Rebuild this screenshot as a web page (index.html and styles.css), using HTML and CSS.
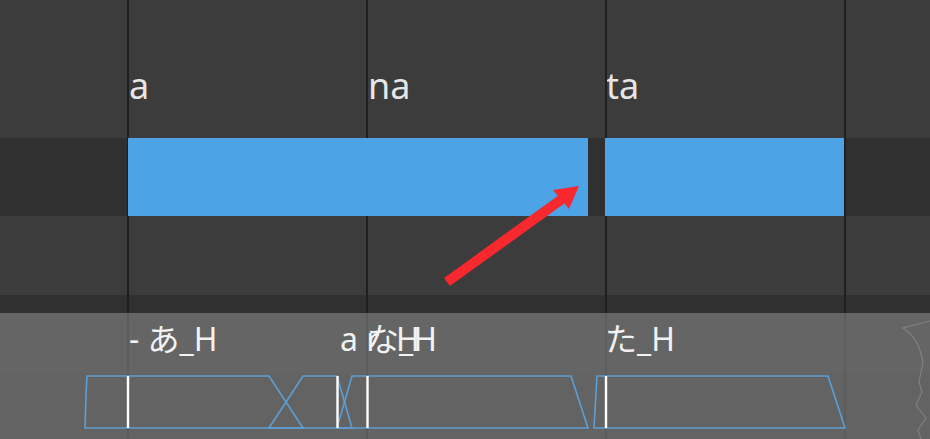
FILE: index.html
```html
<!DOCTYPE html>
<html lang="ja">
<head>
<meta charset="utf-8">
<title>Piano roll</title>
<link rel="stylesheet" href="styles.css">
</head>
<body>
<div class="app">
  <div class="track">
    <div class="band band-lyric">
      <span class="lyric" style="left:128px">a</span>
      <span class="lyric" style="left:367px">na</span>
      <span class="lyric" style="left:605px">ta</span>
    </div>
    <div class="band band-notes">
      <div class="note" style="left:128px;width:460px"></div>
      <div class="note" style="left:605px;width:239px"></div>
    </div>
    <div class="band band-mid"></div>
    <div class="band band-thin"></div>
  </div>

  <div class="gridlines">
    <span class="gl" style="left:127px"></span>
    <span class="gl" style="left:366px"></span>
    <span class="gl" style="left:605px"></span>
    <span class="gl" style="left:844px"></span>
  </div>

  <div class="panel">
    <div class="phonemes">
      <span class="ph" style="left:129px">- あ_H</span>
      <span class="ph" style="left:340px">a r</span>
      <span class="ph" style="left:367px">な_H</span>
      <span class="ph" style="left:396px">H</span>
      <span class="ph" style="left:605px">た_H</span>
    </div>
    <div class="envelopes">
      <svg class="env-svg" width="930" height="66" viewBox="0 0 930 66">
        <g fill="none" stroke="#5c9fd6" stroke-width="1.6" stroke-linejoin="miter">
          <polygon points="87,3 269,3 303,55 85,55 86,22"/>
          <polygon points="269,55 303,3 337,3 352,55"/>
          <polygon points="337,55 352,3 571,3 588,55"/>
          <polygon points="597,3 828,3 845,55 594,55 596,20"/>
        </g>
        <g stroke="#ffffff" stroke-width="2.4">
          <line x1="128" y1="3" x2="128" y2="55"/>
          <line x1="337.5" y1="3" x2="337.5" y2="55"/>
          <line x1="367.5" y1="3" x2="367.5" y2="55"/>
          <line x1="606" y1="3" x2="606" y2="55"/>
        </g>
      </svg>
    </div>
  </div>

  <svg class="overlay" width="930" height="439" viewBox="0 0 930 439">
    <path d="M930 321 L903 328 Q916 336 921 353 L923 362 L919 382 L922 392 L916 405 L926 418 L918 430 L921 439" fill="none" stroke="#a9adb0" stroke-opacity="0.4" stroke-width="1.2"/>
    <line x1="447" y1="282" x2="562" y2="199" stroke="#f7282e" stroke-width="10"/>
    <polygon points="579,186 553,190 569,209" fill="#f7282e"/>
  </svg>
</div>
</body>
</html>
```

FILE: styles.css
```css
* { box-sizing: border-box; }
html, body { margin: 0; padding: 0; }
body {
  background: #3c3c3c;
  font-family: "Noto Sans", "Open Sans", "Noto Sans CJK JP", sans-serif;
  overflow: hidden;
}
.app {
  position: relative;
  width: 930px;
  height: 439px;
  overflow: hidden;
  background: #3c3c3c;
  display: flex;
  flex-direction: column;
}
.track {
  display: flex;
  flex-direction: column;
  flex: 0 0 313px;
}
.band { position: relative; width: 100%; }
.band-lyric { height: 138px; background: #3c3c3c; }
.band-notes { height: 78px; background: #303030; }
.band-mid { height: 79px; background: #3c3c3c; }
.band-thin { height: 18px; background: #303030; }

.lyric {
  position: absolute;
  top: 68px;
  font-size: 36px;
  line-height: 36px;
  color: #e6e6e6;
  padding-left: 1px;
}
.note {
  position: absolute;
  z-index: 2;
  top: 0;
  bottom: 0;
  background: #4ca3e6;
}

.gridlines {
  position: absolute;
  inset: 0;
  z-index: 1;
  pointer-events: none;
}
.gl {
  position: absolute;
  top: 0;
  bottom: 0;
  width: 2px;
  background: #1f1f1f;
}

.panel {
  position: relative;
  z-index: 3;
  flex: 1;
  display: flex;
  flex-direction: column;
  background: rgba(116, 116, 116, 0.73);
}
.phonemes {
  position: relative;
  height: 60px;
}
.ph {
  position: absolute;
  top: 10px;
  font-family: "Noto Sans", "Noto Sans CJK JP", sans-serif;
  font-size: 32px;
  line-height: 32px;
  color: #f2f2f2;
  white-space: pre;
}
.envelopes {
  position: relative;
  flex: 1;
  background: rgba(0, 0, 0, 0.02);
}
.env-svg { display: block; }

.overlay {
  position: absolute;
  left: 0;
  top: 0;
  z-index: 4;
  pointer-events: none;
}
```
